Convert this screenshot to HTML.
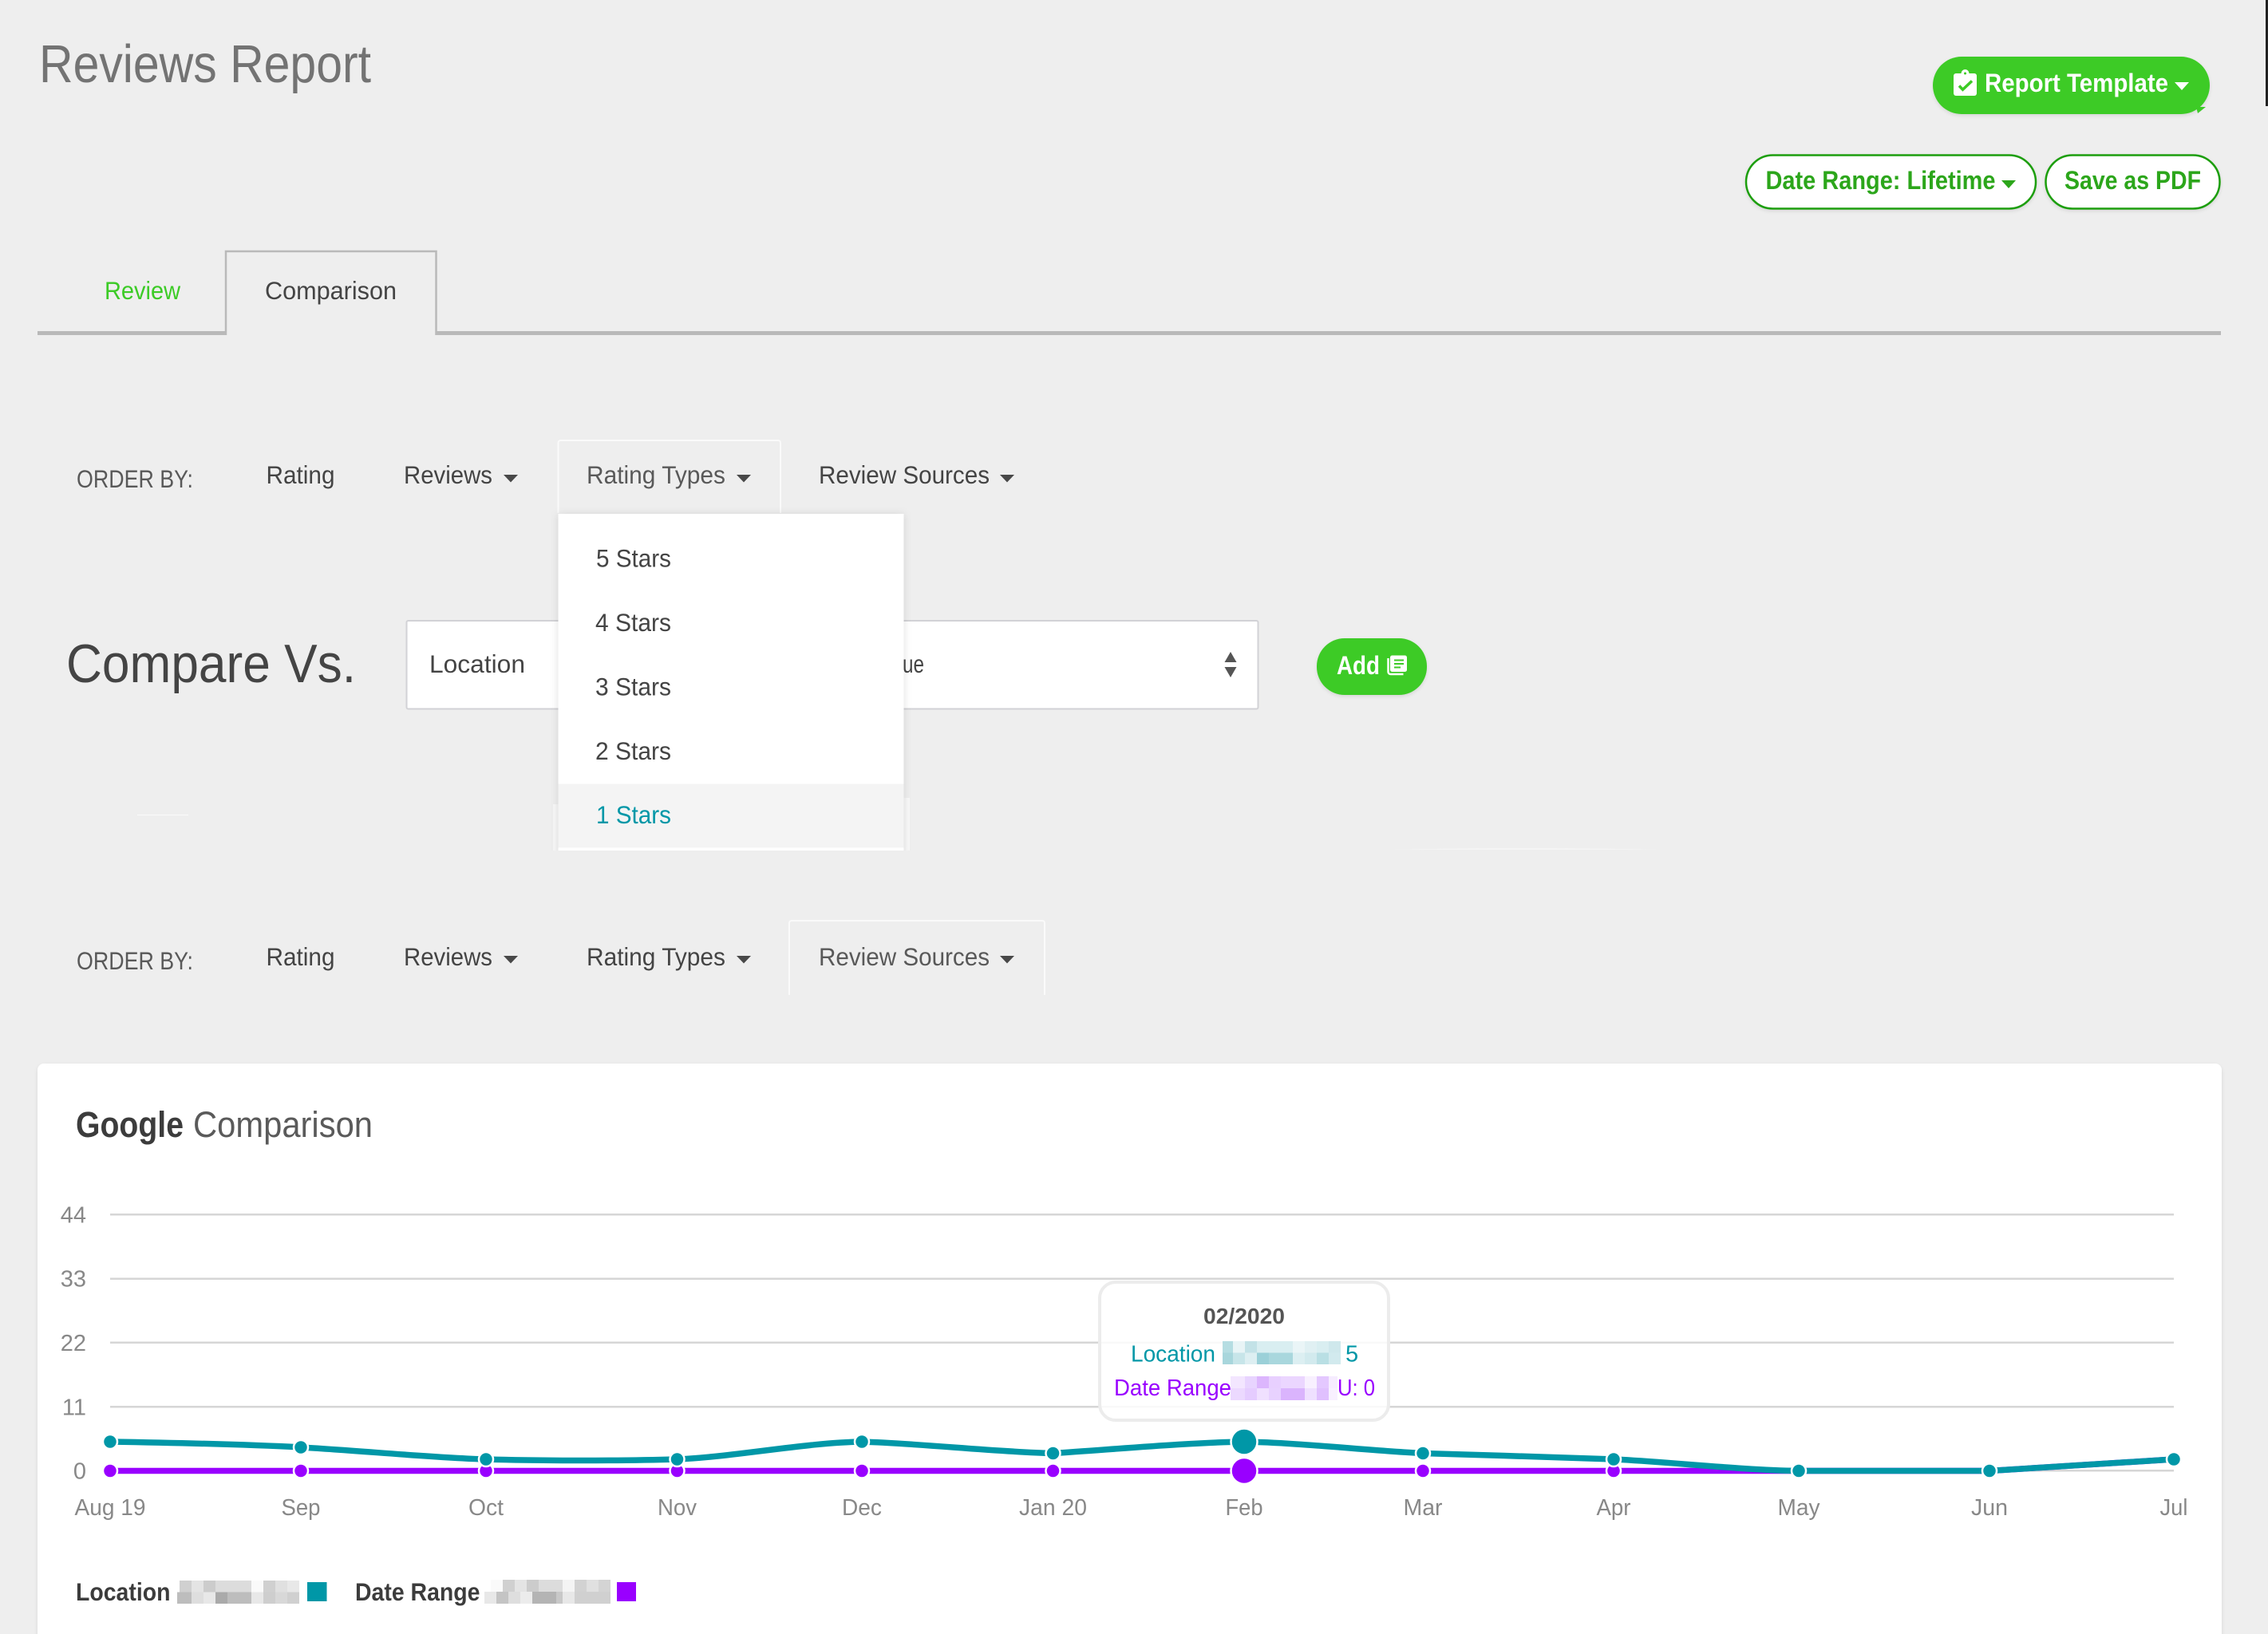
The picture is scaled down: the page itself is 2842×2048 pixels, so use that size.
<!DOCTYPE html>
<html lang="en"><head><meta charset="utf-8"><title>Reviews Report</title>
<style>html,body{margin:0;padding:0;width:2842px;height:2048px;overflow:hidden;background:#eeeeee}svg{display:block}text{font-family:"Liberation Sans",Arial,sans-serif}</style></head><body>
<svg xmlns="http://www.w3.org/2000/svg" width="2842" height="2048" viewBox="0 0 2842 2048">
<defs>
<filter id="sh" x="-10%" y="-10%" width="120%" height="120%"><feDropShadow dx="0" dy="1" stdDeviation="5" flood-color="#000" flood-opacity=".13"/></filter>
<filter id="sb" x="-10%" y="-20%" width="120%" height="150%"><feDropShadow dx="0" dy="2" stdDeviation="2" flood-color="#000" flood-opacity=".1"/></filter>
<clipPath id="dd"><rect x="680" y="630" width="480" height="436"/></clipPath>
</defs>
<rect width="2842" height="2048" fill="#eeeeee"/>
<rect x="2839" y="0" width="3" height="133" fill="#222"/>

<!-- header -->
<text x="49" y="103" font-size="67" fill="#737373" textLength="416" lengthAdjust="spacingAndGlyphs">Reviews Report</text>

<rect x="2422" y="71" width="347" height="72" rx="36" fill="#3ccb26" filter="url(#sb)"/>
<path d="M2752 134h12l-10 8z" fill="#3ccb26"/>
<rect x="2448" y="92" width="29" height="28" rx="3" fill="#fff"/>
<circle cx="2462.500" cy="92" r="5" fill="#fff"/><circle cx="2462.500" cy="92" r="1.500" fill="#3ccb26"/>
<path d="M2455 107.500l4.500 4.800 11.500-10.800" fill="none" stroke="#3ccb26" stroke-width="3.500"/>
<text x="2487" y="115" font-size="32" font-weight="700" fill="#fff" textLength="230" lengthAdjust="spacingAndGlyphs">Report Template</text>
<path d="M2725 103h18l-9 10z" fill="#fff"/>

<rect x="2188" y="194.500" width="363" height="67" rx="33.500" fill="#fff" stroke="#1f9e0e" stroke-width="2.500" filter="url(#sb)"/>
<text x="2212.500" y="237" font-size="32" font-weight="700" fill="#2ca61b" textLength="288" lengthAdjust="spacingAndGlyphs">Date Range: Lifetime</text>
<path d="M2508 226h18l-9 10z" fill="#2ca61b"/>
<rect x="2563.500" y="194.500" width="218" height="67" rx="33.500" fill="#fff" stroke="#1f9e0e" stroke-width="2.500" filter="url(#sb)"/>
<text x="2587" y="237" font-size="32" font-weight="700" fill="#2ca61b" textLength="171" lengthAdjust="spacingAndGlyphs">Save as PDF</text>

<!-- tabs -->
<rect x="47" y="415" width="236" height="5" fill="#b9b9b9"/>
<rect x="546" y="415" width="2237" height="5" fill="#b9b9b9"/>
<path d="M283 420V315H546.500V420" fill="none" stroke="#b9b9b9" stroke-width="2.500"/>
<text x="131" y="375" font-size="31.500" fill="#3ccb26" textLength="95" lengthAdjust="spacingAndGlyphs">Review</text>
<text x="332" y="375" font-size="31.500" fill="#444" textLength="165" lengthAdjust="spacingAndGlyphs">Comparison</text>

<!-- order by 1 -->
<path d="M699.500 643V555a3 3 0 0 1 3-3H975a3 3 0 0 1 3 3V643" fill="none" stroke="#fafafa" stroke-width="2"/>
<text x="96" y="611" font-size="31.500" fill="#595959" textLength="146" lengthAdjust="spacingAndGlyphs">ORDER BY:</text>
<text x="333.500" y="606" font-size="31.500" fill="#444" textLength="86" lengthAdjust="spacingAndGlyphs">Rating</text>
<text x="506" y="606" font-size="31.500" fill="#444" textLength="111" lengthAdjust="spacingAndGlyphs">Reviews</text>
<path d="M631 595h18l-9 9.500z" fill="#484848"/>
<text x="735" y="606" font-size="31.500" fill="#595959" textLength="174" lengthAdjust="spacingAndGlyphs">Rating Types</text>
<path d="M923 595h18l-9 9.500z" fill="#484848"/>
<text x="1026" y="606" font-size="31.500" fill="#444" textLength="214" lengthAdjust="spacingAndGlyphs">Review Sources</text>
<path d="M1253 595h18l-9 9.500z" fill="#484848"/>

<!-- compare vs -->
<text x="83" y="855" font-size="68" fill="#444" textLength="363" lengthAdjust="spacingAndGlyphs">Compare Vs.</text>
<rect x="509.500" y="778" width="1067" height="110.500" rx="2" fill="#fff" stroke="#d2d2d6" stroke-width="2"/>
<text x="538" y="843" font-size="31.500" fill="#444" textLength="120" lengthAdjust="spacingAndGlyphs">Location</text>
<text x="1131" y="843" font-size="31.500" fill="#444" textLength="27" lengthAdjust="spacingAndGlyphs">ue</text>
<path d="M1542 817l7.500 13h-15zM1542 849l-7.500-13h15z" fill="#555"/>
<rect x="1650" y="800" width="138" height="71" rx="35" fill="#3ccb26" filter="url(#sb)"/>
<text x="1675" y="845" font-size="32" font-weight="700" fill="#fff" textLength="54" lengthAdjust="spacingAndGlyphs">Add</text>
<rect x="1742" y="821.500" width="21" height="20.500" rx="2.500" fill="#fff"/>
<path d="M1747 827.500h12M1747 832h12M1747 836.500h8" fill="none" stroke="#3ccb26" stroke-width="2"/>
<path d="M1739.500 825v17a3 3 0 0 0 3 3H1758.500" fill="none" stroke="#fff" stroke-width="2.500"/>
<path d="M172 1021h64v1h-64zM1740 1064.500q170-2 340 0z" fill="#fbfbfb"/>

<!-- dropdown -->
<g clip-path="url(#dd)">
<rect x="693" y="1008" width="8" height="60" fill="#f8f8f8"/>
<rect x="1130" y="1000" width="10" height="68" fill="#f8f8f8"/>
<rect x="699.500" y="644" width="433" height="440" fill="#fff" filter="url(#sh)"/>
<rect x="699.500" y="982.500" width="433" height="80" fill="#f4f4f4"/>
</g>
<text x="747" y="710.500" font-size="31.500" fill="#444" textLength="94" lengthAdjust="spacingAndGlyphs">5 Stars</text>
<text x="746" y="791" font-size="31.500" fill="#444" textLength="95" lengthAdjust="spacingAndGlyphs">4 Stars</text>
<text x="746" y="871.500" font-size="31.500" fill="#444" textLength="95" lengthAdjust="spacingAndGlyphs">3 Stars</text>
<text x="746" y="952" font-size="31.500" fill="#444" textLength="95" lengthAdjust="spacingAndGlyphs">2 Stars</text>
<text x="747" y="1032" font-size="31.500" fill="#0097a7" textLength="94" lengthAdjust="spacingAndGlyphs">1 Stars</text>

<!-- order by 2 -->
<path d="M989 1247V1157a3 3 0 0 1 3-3H1306a3 3 0 0 1 3 3V1247" fill="none" stroke="#fafafa" stroke-width="2"/>
<text x="96" y="1215" font-size="31.500" fill="#595959" textLength="146" lengthAdjust="spacingAndGlyphs">ORDER BY:</text>
<text x="333.500" y="1210" font-size="31.500" fill="#444" textLength="86" lengthAdjust="spacingAndGlyphs">Rating</text>
<text x="506" y="1210" font-size="31.500" fill="#444" textLength="111" lengthAdjust="spacingAndGlyphs">Reviews</text>
<path d="M631 1198h18l-9 9.500z" fill="#484848"/>
<text x="735" y="1210" font-size="31.500" fill="#444" textLength="174" lengthAdjust="spacingAndGlyphs">Rating Types</text>
<path d="M923 1198h18l-9 9.500z" fill="#484848"/>
<text x="1026" y="1210" font-size="31.500" fill="#595959" textLength="214" lengthAdjust="spacingAndGlyphs">Review Sources</text>
<path d="M1253 1198h18l-9 9.500z" fill="#484848"/>

<!-- card -->
<rect x="47" y="1333" width="2737" height="760" rx="8" fill="#fff" filter="url(#sb)"/>
<text x="95" y="1425" font-size="45" font-weight="700" fill="#3c3c3c" textLength="135" lengthAdjust="spacingAndGlyphs">Google</text>
<text x="242" y="1425" font-size="45" fill="#5a5a5a" textLength="225" lengthAdjust="spacingAndGlyphs">Comparison</text>

<!-- grid -->
<g fill="#d6d6d6">
<rect x="138" y="1521" width="2586" height="2.500"/>
<rect x="138" y="1601.500" width="2586" height="2.500"/>
<rect x="138" y="1681.500" width="2586" height="2.500"/>
<rect x="138" y="1762" width="2586" height="2.500"/>
<rect x="138" y="1842" width="2586" height="2.500"/>
</g>
<g font-size="29" fill="#888" text-anchor="end">
<text x="108" y="1532.500">44</text><text x="108" y="1612.500">33</text><text x="108" y="1693">22</text><text x="108" y="1773.500">11</text><text x="108" y="1853.500">0</text>
</g>
<g font-size="29" fill="#888">
<text x="93.500" y="1899" textLength="89" lengthAdjust="spacingAndGlyphs">Aug 19</text>
<text x="352.500" y="1899" textLength="49" lengthAdjust="spacingAndGlyphs">Sep</text>
<text x="587" y="1899" textLength="44" lengthAdjust="spacingAndGlyphs">Oct</text>
<text x="824" y="1899" textLength="49" lengthAdjust="spacingAndGlyphs">Nov</text>
<text x="1055" y="1899" textLength="50" lengthAdjust="spacingAndGlyphs">Dec</text>
<text x="1277" y="1899" textLength="85" lengthAdjust="spacingAndGlyphs">Jan 20</text>
<text x="1535.500" y="1899" textLength="47" lengthAdjust="spacingAndGlyphs">Feb</text>
<text x="1758.500" y="1899" textLength="49" lengthAdjust="spacingAndGlyphs">Mar</text>
<text x="2000.500" y="1899" textLength="43" lengthAdjust="spacingAndGlyphs">Apr</text>
<text x="2227.500" y="1899" textLength="53" lengthAdjust="spacingAndGlyphs">May</text>
<text x="2470" y="1899" textLength="46" lengthAdjust="spacingAndGlyphs">Jun</text>
<text x="2706.500" y="1899" textLength="35" lengthAdjust="spacingAndGlyphs">Jul</text>
</g>

<!-- purple series -->
<path d="M138 1843.500H2493L2724 1829" fill="none" stroke="#9900ff" stroke-width="7.500"/>
<g fill="#9900ff" stroke="#fff" stroke-width="2.500">
<circle cx="138" cy="1843.500" r="9"/><circle cx="377" cy="1843.500" r="9"/><circle cx="609" cy="1843.500" r="9"/><circle cx="848.500" cy="1843.500" r="9"/><circle cx="1080" cy="1843.500" r="9"/><circle cx="1319.500" cy="1843.500" r="9"/><circle cx="1783" cy="1843.500" r="9"/><circle cx="2022" cy="1843.500" r="9"/>
<circle cx="1559" cy="1843.500" r="16.500"/>
</g>

<!-- teal series -->
<path d="M138 1807C200 1808 300 1810 377 1814C450 1818 540 1827 609 1829C680 1831 780 1831 848.500 1829C920 1826 1010 1808 1080 1807C1150 1809 1250 1820 1319.500 1821.500C1390 1817 1490 1808 1559 1807C1625 1808 1720 1818.500 1783 1821.500C1860 1824 1950 1826 2022 1829C2090 1832 2180 1842.500 2254 1843.500L2493 1843.500L2724 1829" fill="none" stroke="#0097a7" stroke-width="7.500"/>
<g fill="#0097a7" stroke="#fff" stroke-width="2.500">
<circle cx="138" cy="1807" r="9"/><circle cx="377" cy="1814" r="9"/><circle cx="609" cy="1829" r="9"/><circle cx="848.500" cy="1829" r="9"/><circle cx="1080" cy="1807" r="9"/><circle cx="1319.500" cy="1821.500" r="9"/><circle cx="1783" cy="1821.500" r="9"/><circle cx="2022" cy="1829" r="9"/><circle cx="2254" cy="1843.500" r="9"/><circle cx="2493" cy="1843.500" r="9"/><circle cx="2724" cy="1829" r="9"/>
<circle cx="1559" cy="1807" r="16.500"/>
</g>

<!-- tooltip -->
<rect x="1378" y="1607" width="362" height="173" rx="20" fill="#fff" fill-opacity=".85" stroke="#ececec" stroke-width="4"/>
<text x="1508" y="1659" font-size="28" font-weight="700" fill="#555" textLength="102" lengthAdjust="spacingAndGlyphs">02/2020</text>
<text x="1417" y="1706.500" font-size="29" fill="#0097a7" textLength="106" lengthAdjust="spacingAndGlyphs">Location</text>
<text x="1686" y="1706.500" font-size="29" fill="#0097a7">5</text>
<text x="1396" y="1749" font-size="29" fill="#9900ff" textLength="147" lengthAdjust="spacingAndGlyphs">Date Range</text>
<text x="1676" y="1749" font-size="29" fill="#9900ff" textLength="47" lengthAdjust="spacingAndGlyphs">U: 0</text>
<g>
<rect x="1532" y="1681" width="13" height="14.500" fill="#b5dde2"/><rect x="1545" y="1681" width="15" height="14.500" fill="#e8f4f6"/><rect x="1560" y="1681" width="15" height="14.500" fill="#c3e2e7"/><rect x="1575" y="1681" width="45" height="14.500" fill="#d9eef1"/><rect x="1620" y="1681" width="15" height="14.500" fill="#eaf5f7"/><rect x="1635" y="1681" width="15" height="14.500" fill="#e0f0f3"/><rect x="1650" y="1681" width="15" height="14.500" fill="#d9eef1"/><rect x="1665" y="1681" width="15" height="14.500" fill="#cfe8ec"/>
<rect x="1532" y="1695.500" width="13" height="14.500" fill="#a8d6dc"/><rect x="1545" y="1695.500" width="15" height="14.500" fill="#c7e5e9"/><rect x="1560" y="1695.500" width="15" height="14.500" fill="#ddeff2"/><rect x="1575" y="1695.500" width="15" height="14.500" fill="#9bd0d8"/><rect x="1590" y="1695.500" width="30" height="14.500" fill="#a9d7dd"/><rect x="1620" y="1695.500" width="15" height="14.500" fill="#dceff2"/><rect x="1635" y="1695.500" width="15" height="14.500" fill="#d2eaee"/><rect x="1650" y="1695.500" width="15" height="14.500" fill="#b9dfe4"/><rect x="1665" y="1695.500" width="15" height="14.500" fill="#d2eaee"/>
<rect x="1542" y="1725" width="18" height="15" fill="#f3e6ff"/><rect x="1560" y="1725" width="15" height="15" fill="#e8d4ff"/><rect x="1575" y="1725" width="15" height="15" fill="#dcb6fd"/><rect x="1590" y="1725" width="15" height="15" fill="#e8d0ff"/><rect x="1605" y="1725" width="30" height="15" fill="#ebd6ff"/><rect x="1635" y="1725" width="15" height="15" fill="#f8f0ff"/><rect x="1650" y="1725" width="15" height="15" fill="#e4c8ff"/><rect x="1665" y="1725" width="11" height="15" fill="#f6ecff"/>
<rect x="1542" y="1740" width="18" height="15" fill="#ecd9ff"/><rect x="1560" y="1740" width="15" height="15" fill="#e5ccff"/><rect x="1575" y="1740" width="15" height="15" fill="#f0e0ff"/><rect x="1590" y="1740" width="15" height="15" fill="#e8d2ff"/><rect x="1605" y="1740" width="30" height="15" fill="#dab4fd"/><rect x="1635" y="1740" width="15" height="15" fill="#efe0ff"/><rect x="1650" y="1740" width="15" height="15" fill="#e0c0fe"/><rect x="1665" y="1740" width="11" height="15" fill="#f8f0ff"/>
</g>

<!-- legend -->
<text x="95" y="2006" font-size="31.500" font-weight="700" fill="#3c3c3c" textLength="118.500" lengthAdjust="spacingAndGlyphs">Location</text>
<g>
<rect x="225" y="1981" width="15" height="14.500" fill="#d0d0d0"/><rect x="240" y="1981" width="15" height="14.500" fill="#e4e4e4"/><rect x="255" y="1981" width="15" height="14.500" fill="#ccc"/><rect x="270" y="1981" width="45" height="14.500" fill="#dcdcdc"/><rect x="315" y="1981" width="15" height="14.500" fill="#fafafa"/><rect x="330" y="1981" width="15" height="14.500" fill="#d0d0d0"/><rect x="345" y="1981" width="15" height="14.500" fill="#e0e0e0"/><rect x="360" y="1981" width="15" height="14.500" fill="#e8e8e8"/>
<rect x="222" y="1995.500" width="18" height="14.500" fill="#bdbdbd"/><rect x="240" y="1995.500" width="15" height="14.500" fill="#dedede"/><rect x="255" y="1995.500" width="15" height="14.500" fill="#e8e8e8"/><rect x="270" y="1995.500" width="15" height="14.500" fill="#aaa"/><rect x="285" y="1995.500" width="30" height="14.500" fill="#bdbdbd"/><rect x="315" y="1995.500" width="15" height="14.500" fill="#e8e8e8"/><rect x="330" y="1995.500" width="15" height="14.500" fill="#cecece"/><rect x="345" y="1995.500" width="15" height="14.500" fill="#d8d8d8"/><rect x="360" y="1995.500" width="15" height="14.500" fill="#d0d0d0"/>
</g>
<rect x="385" y="1983" width="24.500" height="24" fill="#0097a7"/>
<text x="445" y="2006" font-size="31.500" font-weight="700" fill="#3c3c3c" textLength="156.500" lengthAdjust="spacingAndGlyphs">Date Range</text>
<g>
<rect x="615" y="1980" width="15" height="15" fill="#fafafa"/><rect x="630" y="1980" width="15" height="15" fill="#d0d0d0"/><rect x="645" y="1980" width="15" height="15" fill="#e4e4e4"/><rect x="660" y="1980" width="15" height="15" fill="#ccc"/><rect x="675" y="1980" width="30" height="15" fill="#dcdcdc"/><rect x="705" y="1980" width="15" height="15" fill="#f4f4f4"/><rect x="720" y="1980" width="15" height="15" fill="#d2d2d2"/><rect x="735" y="1980" width="15" height="15" fill="#e0e0e0"/><rect x="750" y="1980" width="15" height="15" fill="#d4d4d4"/>
<rect x="607" y="1995" width="15" height="15" fill="#e8e8e8"/><rect x="622" y="1995" width="15" height="15" fill="#c4c4c4"/><rect x="637" y="1995" width="15" height="15" fill="#dedede"/><rect x="652" y="1995" width="15" height="15" fill="#ececec"/><rect x="667" y="1995" width="30" height="15" fill="#b4b4b4"/><rect x="697" y="1995" width="8" height="15" fill="#c8c8c8"/><rect x="705" y="1995" width="15" height="15" fill="#e8e8e8"/><rect x="720" y="1995" width="45" height="15" fill="#d0d0d0"/>
</g>
<rect x="773" y="1983" width="24" height="24" fill="#9900ff"/>
</svg>
</body></html>
